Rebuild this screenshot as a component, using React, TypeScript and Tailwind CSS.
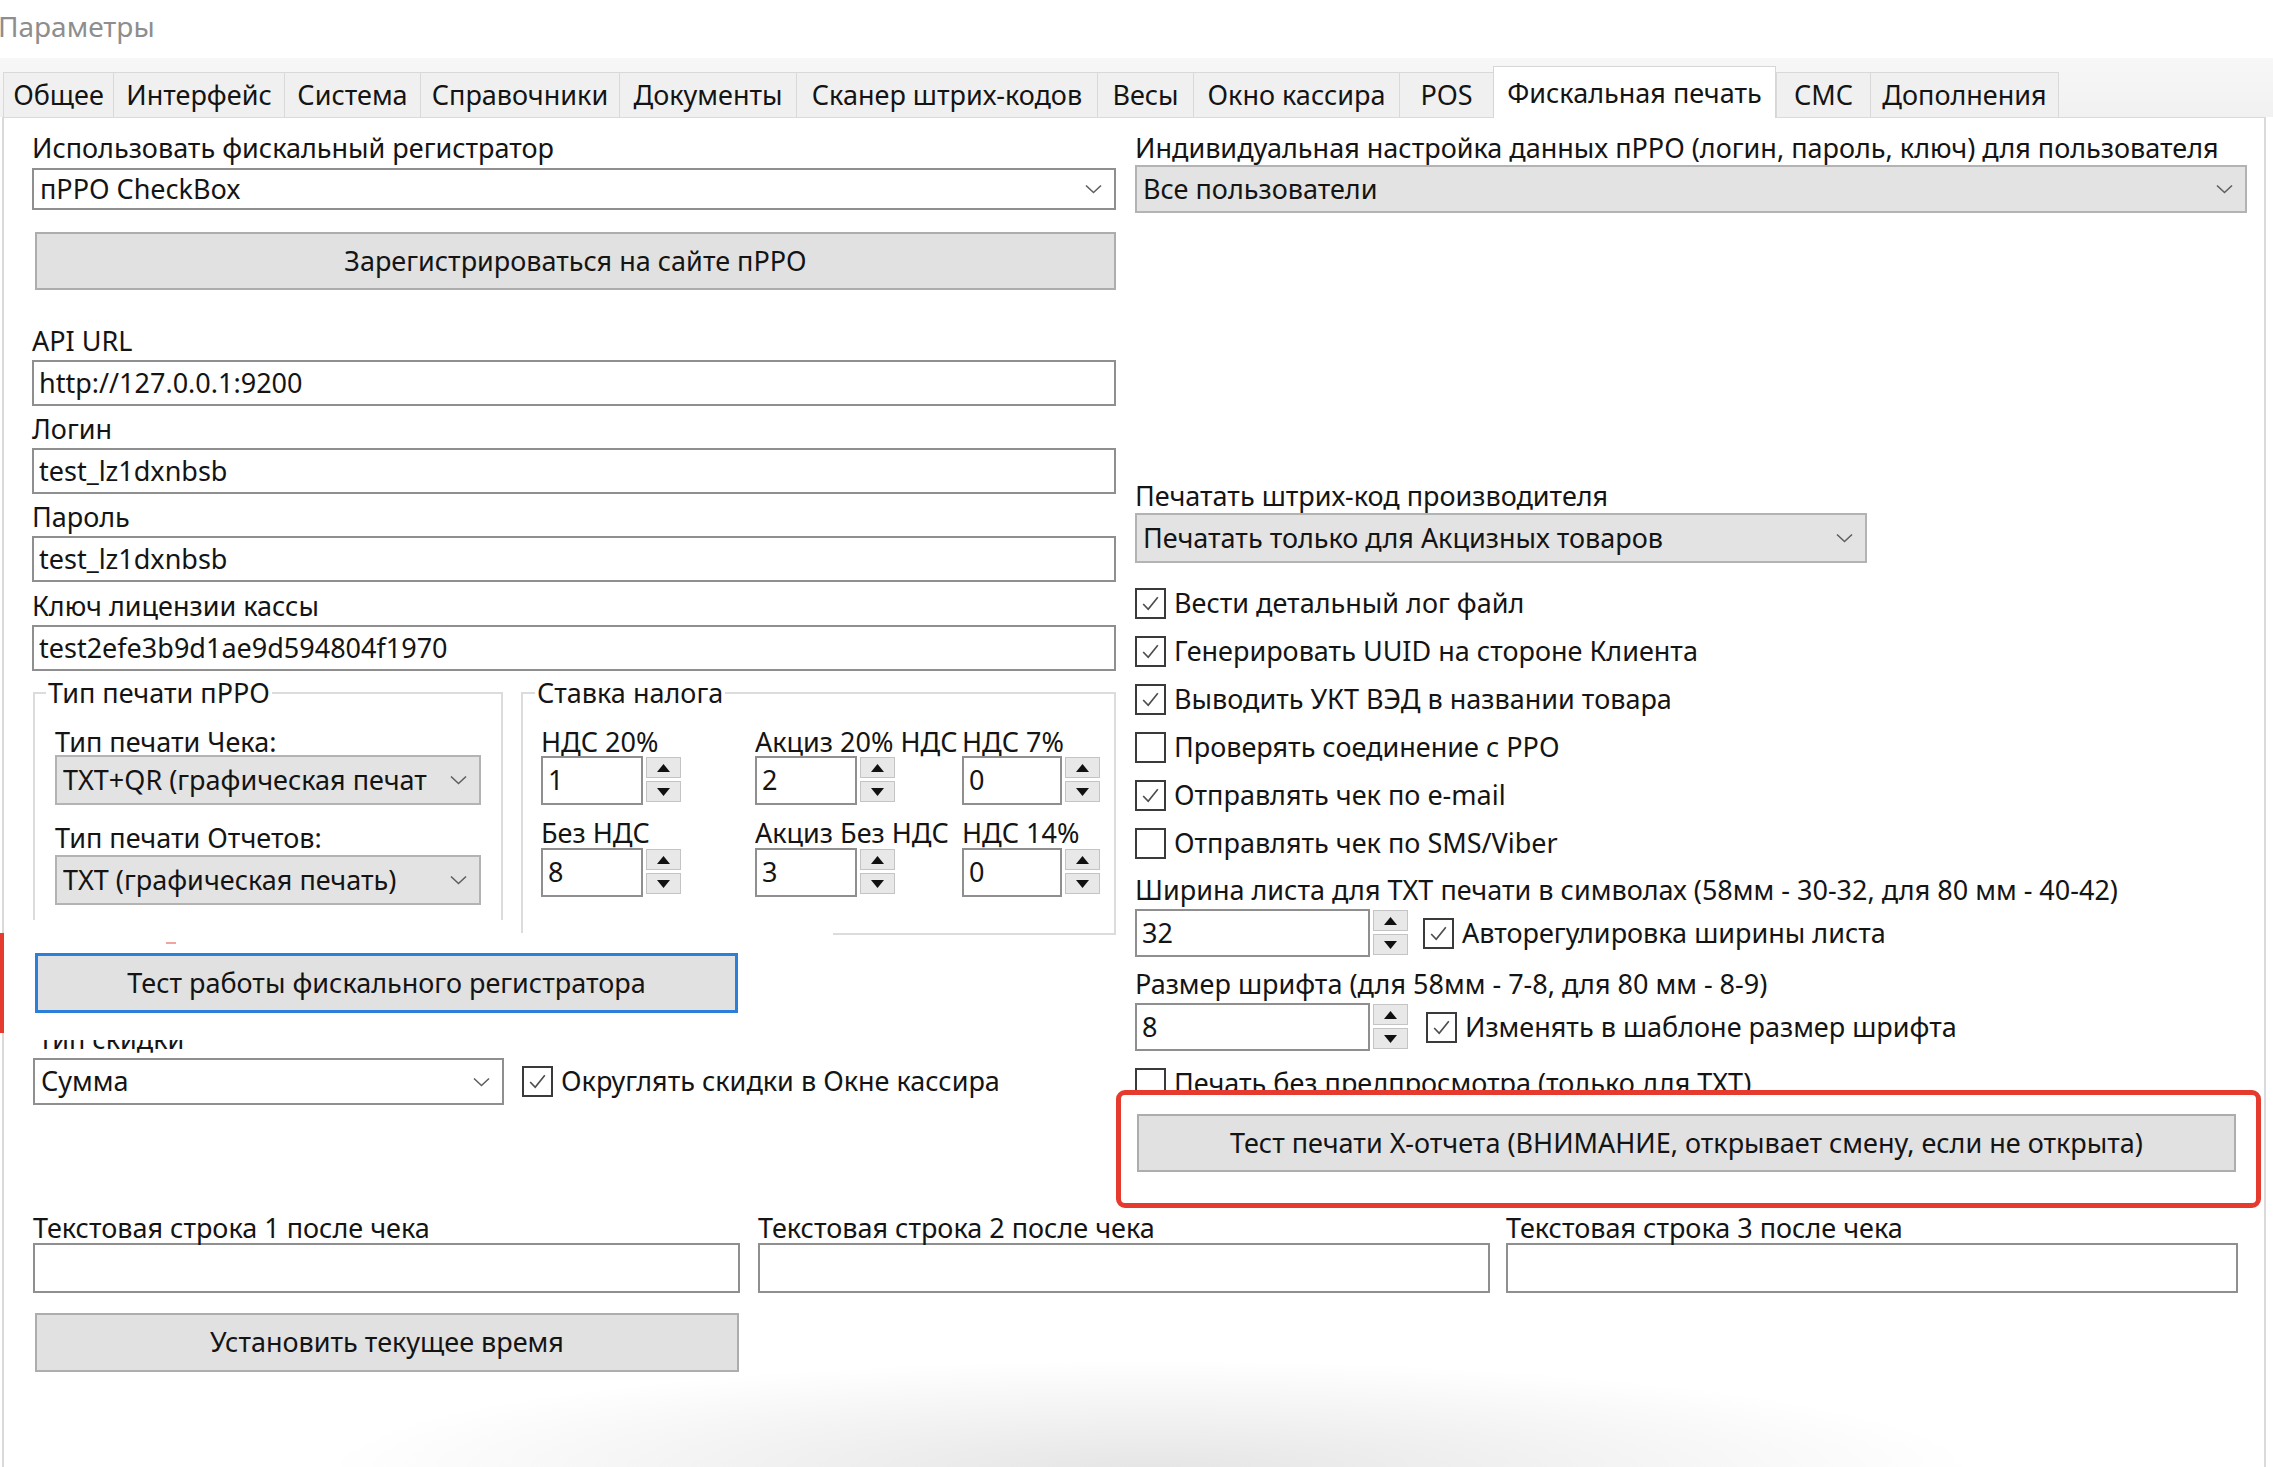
import React from "react";

const tabs: { label: string; w: number; active?: boolean }[] = [
  { label: "Общее", w: 110 },
  { label: "Интерфейс", w: 171 },
  { label: "Система", w: 136 },
  { label: "Справочники", w: 199 },
  { label: "Документы", w: 177 },
  { label: "Сканер штрих-кодов", w: 301 },
  { label: "Весы", w: 96 },
  { label: "Окно кассира", w: 206 },
  { label: "POS", w: 94 },
  { label: "Фискальная печать", w: 283, active: true },
  { label: "СМС", w: 94 },
  { label: "Дополнения", w: 188 },
];

function Chevron() {
  return (
    <svg width="17" height="10" viewBox="0 0 17 10" className="shrink-0">
      <path d="M1 1.5 L8.5 8.5 L16 1.5" fill="none" stroke="#5f5f5f" strokeWidth="1.6" />
    </svg>
  );
}

function Label({ children, className = "" }: { children: React.ReactNode; className?: string }) {
  return <div className={"h-[34px] leading-[34px] whitespace-nowrap " + className}>{children}</div>;
}

function TextInput({ value = "", className = "" }: { value?: string; className?: string }) {
  return (
    <div className={"h-[46px] border-2 border-[#8f8f8f] bg-white flex items-center px-[5px] whitespace-nowrap " + className}>
      {value}
    </div>
  );
}

function Select({ value, gray, className = "" }: { value: string; gray?: boolean; className?: string }) {
  return (
    <div
      className={
        "flex items-center justify-between pl-[6px] pr-[12px] border-2 whitespace-nowrap overflow-hidden " +
        (gray ? "bg-[#e3e3e3] border-[#b3b3b3] " : "bg-white border-[#8f8f8f] ") +
        className
      }
    >
      <span className="overflow-hidden">{value}</span>
      <Chevron />
    </div>
  );
}

function Button({ children, className = "" }: { children: React.ReactNode; className?: string }) {
  return (
    <div className={"flex items-center justify-center bg-[#e1e1e1] border-2 border-[#adadad] whitespace-nowrap " + className}>
      {children}
    </div>
  );
}

function Tri({ up }: { up?: boolean }) {
  return (
    <svg width="13" height="8" viewBox="0 0 13 8">
      <path d={up ? "M0 8 L6.5 0 L13 8 Z" : "M0 0 L6.5 8 L13 0 Z"} fill="#111" />
    </svg>
  );
}

function Spin({ value, inputW, h = 49 }: { value: string; inputW: number; h?: number }) {
  return (
    <div className="flex items-start gap-[3px]">
      <div
        className="border-2 border-[#8f8f8f] bg-white flex items-center px-[5px]"
        style={{ width: inputW, height: h }}
      >
        {value}
      </div>
      <div className="flex flex-col gap-[3px] pt-[1px]">
        <div className="w-[35px] h-[21px] border border-[#c4c4c4] bg-[#e8e8e8] flex items-center justify-center">
          <Tri up />
        </div>
        <div className="w-[35px] h-[21px] border border-[#c4c4c4] bg-[#e8e8e8] flex items-center justify-center">
          <Tri />
        </div>
      </div>
    </div>
  );
}

function Box({ checked }: { checked?: boolean }) {
  return (
    <div className="w-[31px] h-[31px] border-2 border-[#3a3a3a] bg-white flex items-center justify-center shrink-0">
      {checked && (
        <svg width="23" height="23" viewBox="0 0 22 22">
          <path d="M4 11.5 L8.8 16.5 L18 5" fill="none" stroke="#4d4d4d" strokeWidth="1.6" />
        </svg>
      )}
    </div>
  );
}

function Check({ checked, label, className = "" }: { checked?: boolean; label: string; className?: string }) {
  return (
    <div className={"flex items-center whitespace-nowrap " + className}>
      <Box checked={checked} />
      <span className="ml-[8px]">{label}</span>
    </div>
  );
}

export default function App() {
  return (
    <div className="relative w-[2273px] h-[1467px] overflow-hidden bg-white text-[#141414] font-['Noto_Sans',sans-serif] text-[27px]">
      {/* title */}
      <div className="h-[58px] flex items-center pb-[6px] -ml-[2px] text-[28px] text-[#8e8e8e]">Параметры</div>

      {/* tab strip */}
      <div className="h-[59px] bg-[linear-gradient(#f7f7f7,#f1f1f1)] flex items-end pl-[3px]">
        {tabs.map((t) =>
          t.active ? (
            <div
              key={t.label}
              className="relative z-10 h-[52px] -mb-[1px] bg-white border-x border-t border-[#d6d6d6] flex items-start justify-center pt-[6px] whitespace-nowrap"
              style={{ width: t.w }}
            >
              {t.label}
            </div>
          ) : (
            <div
              key={t.label}
              className="h-[45px] bg-[#f0f0f0] border-l border-t border-[#d9d9d9] flex items-center justify-center whitespace-nowrap"
              style={{ width: t.w }}
            >
              {t.label}
            </div>
          )
        )}
        <div className="h-[45px] border-l border-[#d9d9d9]" />
      </div>

      {/* panel */}
      <div className="ml-[2px] w-[2264px] h-[1350px] border-l-2 border-r-2 border-t border-[#dadada] bg-white pl-[28px] pt-[13px]">
        <div className="flex gap-[19px] items-start">
          {/* left column */}
          <div className="w-[1084px] flex flex-col">
            <Label>Использовать фискальный регистратор</Label>
            <Select value="пРРО CheckBox" className="mt-[3px] h-[42px]" />
            <Button className="mt-[22px] ml-[3px] h-[58px]">Зарегистрироваться на сайте пРРО</Button>

            <Label className="mt-[34px]">API URL</Label>
            <TextInput value="http://127.0.0.1:9200" className="mt-[2px]" />
            <Label className="mt-[6px]">Логин</Label>
            <TextInput value="test_lz1dxnbsb" className="mt-[2px]" />
            <Label className="mt-[6px]">Пароль</Label>
            <TextInput value="test_lz1dxnbsb" className="mt-[2px]" />
            <Label className="mt-[7px]">Ключ лицензии кассы</Label>
            <TextInput value="test2efe3b9d1ae9d594804f1970" className="mt-[2px]" />

            {/* groups */}
            <div className="mt-[5px] ml-[1px] flex items-start gap-[18px]">
              <fieldset className="w-[471px] h-[244px] min-w-0 border-2 border-b-0 border-[#dcdcdc] pl-[20px]">
                <legend className="ml-[-9px] px-[2px] h-[34px] leading-[34px] whitespace-nowrap">Тип печати пРРО</legend>
                <div className="mt-[17px] h-[30px] leading-[30px] whitespace-nowrap">Тип печати Чека:</div>
                <Select gray value="TXT+QR (графическая печат" className="mt-[-2px] h-[50px] w-[426px]" />
                <div className="mt-[18px] h-[30px] leading-[30px] whitespace-nowrap">Тип печати Отчетов:</div>
                <Select gray value="TXT (графическая печать)" className="mt-[2px] h-[50px] w-[426px]" />
              </fieldset>

              <div className="flex flex-col">
                <fieldset className="w-[595px] h-[257px] min-w-0 border-2 border-b-0 border-[#dcdcdc] pl-[18px]">
                  <legend className="ml-[-6px] px-[2px] h-[34px] leading-[34px] whitespace-nowrap">Ставка налога</legend>
                  <div className="flex mt-[17px]">
                    <div className="w-[214px] shrink-0">
                      <div className="h-[30px] leading-[30px] whitespace-nowrap">НДС 20%</div>
                      <div className="mt-[-1px]">
                        <Spin value="1" inputW={102} />
                      </div>
                      <div className="mt-[13px] h-[30px] leading-[30px] whitespace-nowrap">Без НДС</div>
                      <div>
                        <Spin value="8" inputW={102} />
                      </div>
                    </div>
                    <div className="w-[207px] shrink-0">
                      <div className="h-[30px] leading-[30px] whitespace-nowrap overflow-hidden">Акциз 20% НДС</div>
                      <div className="mt-[-1px]">
                        <Spin value="2" inputW={102} />
                      </div>
                      <div className="mt-[13px] h-[30px] leading-[30px] whitespace-nowrap overflow-hidden">Акциз Без НДС</div>
                      <div>
                        <Spin value="3" inputW={102} />
                      </div>
                    </div>
                    <div className="w-[150px] shrink-0">
                      <div className="h-[30px] leading-[30px] whitespace-nowrap bg-white">НДС 7%</div>
                      <div className="mt-[-1px]">
                        <Spin value="0" inputW={100} />
                      </div>
                      <div className="mt-[13px] h-[30px] leading-[30px] whitespace-nowrap">НДС 14%</div>
                      <div>
                        <Spin value="0" inputW={100} />
                      </div>
                    </div>
                  </div>
                </fieldset>
                <div className="self-end w-[283px] h-[2px] bg-[#dcdcdc]" />
              </div>
            </div>

            <div className="mt-[18px] ml-[3px] w-[703px] h-[60px] flex items-center justify-center bg-[#e1e1e1] border-[3px] border-[#2c7fd9] whitespace-nowrap">
              Тест работы фискального регистратора
            </div>

            <div className="mt-[27px] ml-[6px] h-[16px] overflow-hidden">
              <div className="mt-[-18px] h-[34px] leading-[34px] whitespace-nowrap">Тип скидки</div>
            </div>
            <div className="mt-[2px] flex items-center gap-[18px]">
              <Select value="Сумма" className="ml-[1px] w-[471px] h-[47px]" />
              <Check checked label="Округлять скидки в Окне кассира" />
            </div>
          </div>

          {/* right column */}
          <div className="w-[1112px] flex flex-col">
            <Label>Индивидуальная настройка данных пРРО (логин, пароль, ключ) для пользователя</Label>
            <Select gray value="Все пользователи" className="h-[48px]" />

            <Label className="mt-[266px]">Печатать штрих-код производителя</Label>
            <Select gray value="Печатать только для Акцизных товаров" className="h-[50px] w-[732px]" />

            <div className="mt-[16px] flex flex-col">
              <Check checked label="Вести детальный лог файл" className="h-[48px]" />
              <Check checked label="Генерировать UUID на стороне Клиента" className="h-[48px]" />
              <Check checked label="Выводить УКТ ВЭД в названии товара" className="h-[48px]" />
              <Check label="Проверять соединение с РРО" className="h-[48px]" />
              <Check checked label="Отправлять чек по e-mail" className="h-[48px]" />
              <Check label="Отправлять чек по SMS/Viber" className="h-[48px]" />
            </div>

            <Label className="mt-[6px]">Ширина листа для TXT печати в символах (58мм - 30-32, для 80 мм - 40-42)</Label>
            <div className="mt-[2px] h-[48px] flex items-start gap-[15px]">
              <Spin value="32" inputW={235} h={48} />
              <Check checked label="Авторегулировка ширины листа" className="h-[48px]" />
            </div>

            <Label className="mt-[10px]">Размер шрифта (для 58мм - 7-8, для 80 мм - 8-9)</Label>
            <div className="mt-[2px] h-[48px] flex items-start gap-[18px]">
              <Spin value="8" inputW={235} h={48} />
              <Check checked label="Изменять в шаблоне размер шрифта" className="h-[48px]" />
            </div>

            <Check label="Печать без предпросмотра (только для TXT)" className="mt-[8px] h-[48px]" />

            <div className="relative z-10 mt-[-17px] ml-[-19px] mr-[-14px] h-[118px] rounded-[9px] border-[5px] border-[#e63a2e] bg-white pt-[19px] pl-[16px] pr-[20px]">
              <Button className="h-[58px]">Тест печати Х-отчета (ВНИМАНИЕ, открывает смену, если не открыта)</Button>
            </div>
          </div>
        </div>

        {/* bottom */}
        <div className="mt-[3px] flex gap-[18px] ml-[1px]">
          <div className="w-[707px]">
            <Label>Текстовая строка 1 после чека</Label>
            <TextInput className="mt-[-2px] h-[50px]" />
          </div>
          <div className="w-[732px]">
            <Label>Текстовая строка 2 после чека</Label>
            <TextInput className="mt-[-2px] h-[50px]" />
          </div>
          <div className="w-[732px] -ml-[2px]">
            <Label>Текстовая строка 3 после чека</Label>
            <TextInput className="mt-[-2px] h-[50px]" />
          </div>
        </div>
        <Button className="mt-[20px] ml-[3px] w-[704px] h-[59px]">Установить текущее время</Button>
      </div>

      {/* annotation slivers */}
      <div className="absolute left-0 top-[933px] w-[4px] h-[100px] bg-[#e63a2e]" />
      <div className="absolute left-[166px] top-[942px] w-[10px] h-[2px] bg-[#f2a49e]" />

      {/* bottom vignette */}
      <div className="absolute left-[250px] top-[1350px] w-[1800px] h-[240px] bg-[radial-gradient(ellipse_at_center,rgba(0,0,0,0.1),rgba(0,0,0,0)_65%)]" />
    </div>
  );
}
